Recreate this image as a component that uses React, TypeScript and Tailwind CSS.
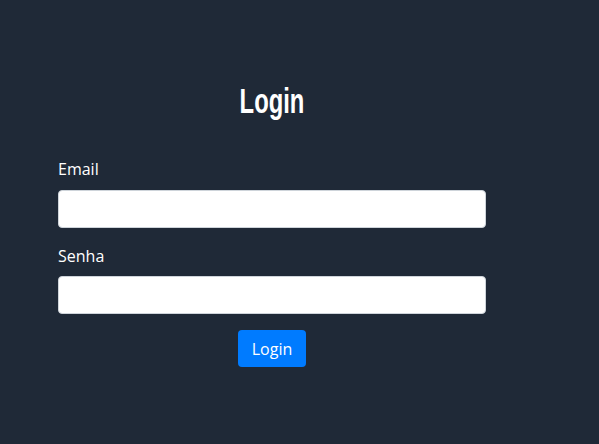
export default function App() {
  return (
    <div className="min-h-[444px] w-full bg-[#1f2937] font-['Open_Sans',sans-serif] text-white">
      <div className="w-[428px] ml-[58px] pt-[81px]">
        {/* Title — condensed heavy face approximated by a narrowed bold sans */}
        <h1 className="text-center text-[35px] leading-[40px] font-bold font-['Liberation_Sans',sans-serif] scale-x-[0.68]">
          Login
        </h1>

        <form className="mt-[36px] flex flex-col" onSubmit={(e) => e.preventDefault()}>
          <div className="mb-4">
            <label className="block text-base leading-6 mb-[9px]">Email</label>
            <input
              type="email"
              className="block w-full h-[38px] rounded bg-white border border-[#ced4da] px-3 text-black"
            />
          </div>
          <div className="mb-4">
            <label className="block text-base leading-6 mb-[8px]">Senha</label>
            <input
              type="password"
              className="block w-full h-[38px] rounded bg-white border border-[#ced4da] px-3 text-black"
            />
          </div>
          <div className="flex justify-center">
            <button
              type="submit"
              className="h-[37px] w-[68px] rounded bg-[#007bff] text-base leading-6 text-white"
            >
              Login
            </button>
          </div>
        </form>
      </div>
    </div>
  );
}
